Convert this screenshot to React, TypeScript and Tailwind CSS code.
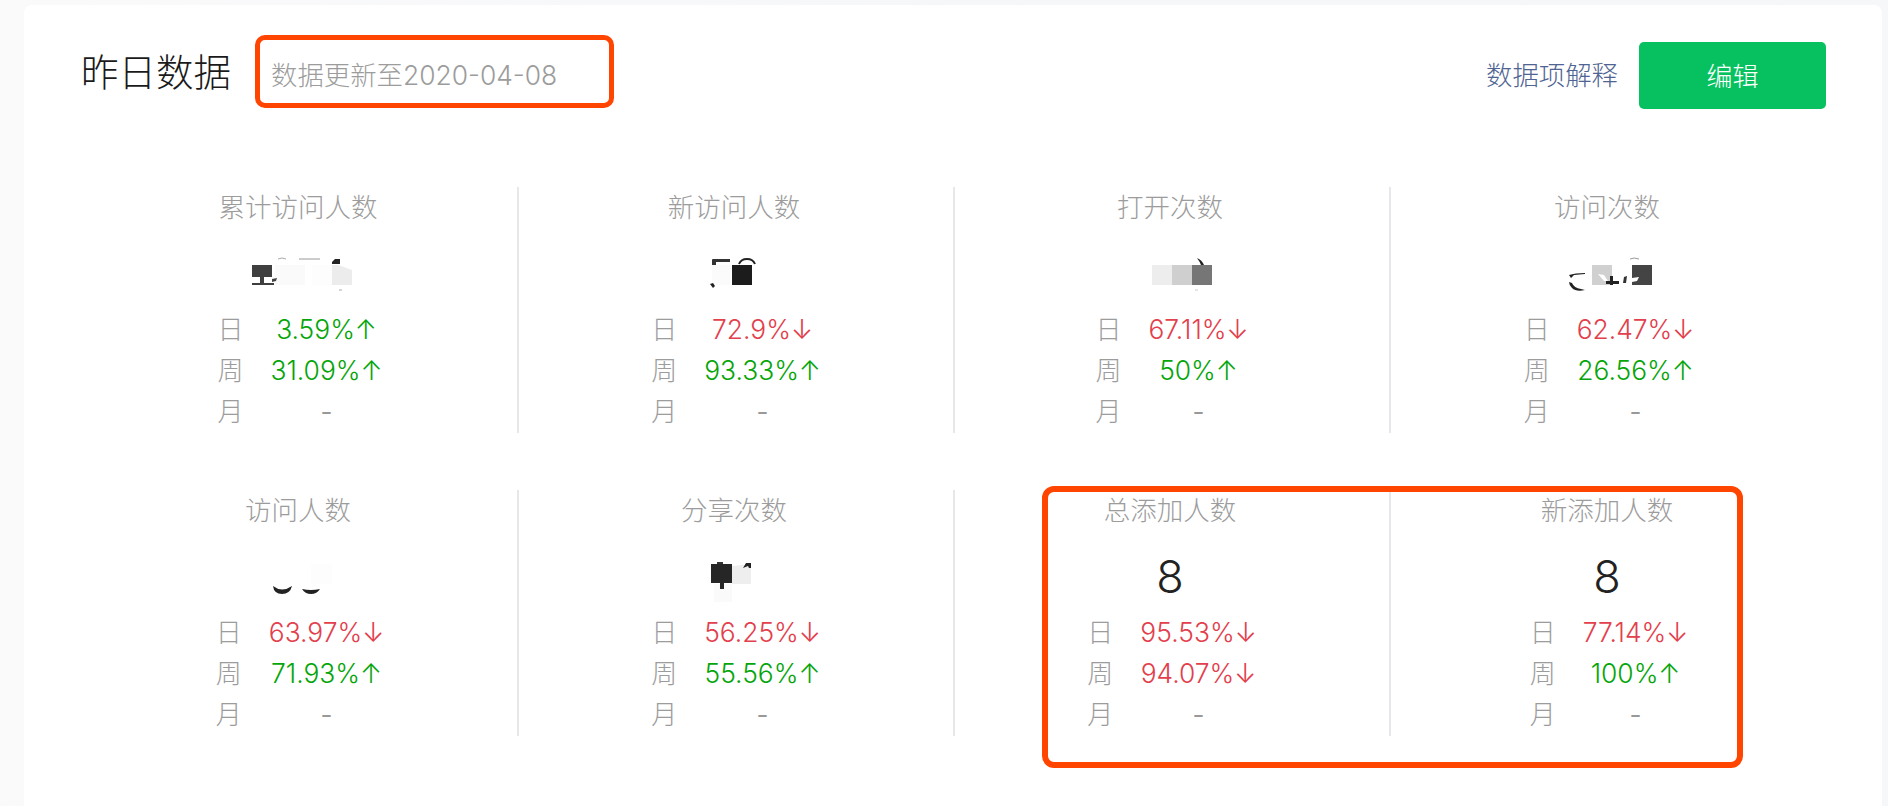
const stats = [
  {
    title: "累计访问人数",
    day: "3.59%↑",
    week: "31.09%↑",
    mosaic: (
      <svg width="120" height="50" viewBox="240 248 120 50">
        <rect x="275" y="264" width="30" height="20" fill="#fafafa" />
        <rect x="312" y="264" width="20" height="20" fill="#fdfdfd" />
        <path d="M332 264h6l14 5v15h-20z" fill="#ececec" />
        <rect x="252" y="264" width="20" height="12" fill="#3f3f3f" />
        <rect x="260" y="276" width="4" height="7" fill="#3f3f3f" />
        <rect x="252" y="282" width="22" height="2" fill="#3f3f3f" />
        <path d="M272 278l5-1-1 3-4 1z" fill="#444" />
        <path d="M332 263v-2l3-3h5v5z" fill="#222" />
        <path d="M299 258h21" stroke="#999" strokeWidth="1" />
        <path d="M278 258q4-2 8 0" stroke="#aaa" strokeWidth="1" fill="none" />
        <path d="M339 289h3" stroke="#aaa" strokeWidth="1" />
      </svg>
    ),
  },
  {
    title: "新访问人数",
    day: "72.9%↓",
    week: "93.33%↑",
    mosaic: (
      <svg width="120" height="50" viewBox="676 248 120 50">
        <rect x="712" y="264" width="19" height="20" fill="#fbfbfb" />
        <path d="M712 264v-5q0-1 1-1h17v3h-14v3z" fill="#333" />
        <rect x="732" y="264" width="20" height="20" fill="#1c1c1c" />
        <path d="M739 263q2-5 8-5t8 5" stroke="#222" strokeWidth="2" fill="none" />
        <path d="M710 283l3-1 2 3-2 2z" fill="#222" />
      </svg>
    ),
  },
  {
    title: "打开次数",
    day: "67.11%↓",
    week: "50%↑",
    mosaic: (
      <svg width="120" height="50" viewBox="1112 248 120 50">
        <rect x="1152" y="264" width="20" height="20" fill="#ededed" />
        <rect x="1172" y="264" width="20" height="20" fill="#cfcfcf" />
        <rect x="1192" y="264" width="20" height="20" fill="#767676" />
        <path d="M1197 257q5 2 7 7h-3q-1-3-4-7z" fill="#222" />
        <path d="M1195 289h3" stroke="#ccc" strokeWidth="1" />
      </svg>
    ),
  },
  {
    title: "访问次数",
    day: "62.47%↓",
    week: "26.56%↑",
    mosaic: (
      <svg width="120" height="50" viewBox="1549 248 120 50">
        <rect x="1592" y="264" width="20" height="20" fill="#d0d0d0" />
        <path d="M1598 273l6 1 4 6h-4z" fill="#fff" />
        <rect x="1632" y="264" width="20" height="20" fill="#444" />
        <path d="M1632 277l7-1-2 4-5 1z" fill="#fff" />
        <rect x="1610" y="275" width="3" height="9" fill="#222" />
        <rect x="1606" y="280" width="13" height="3" fill="#222" />
        <path d="M1624 276l3-1-1 7h-3z" fill="#333" />
        <path d="M1569 274q6-2 16-2v1l-11 1-3 3zM1569 281l3 1q2 5 9 6l4 1q-9 2-13-2-3-3-3-6z" fill="#222" />
        <path d="M1630 258q4-2 9 0" stroke="#999" strokeWidth="1" fill="none" />
      </svg>
    ),
  },
  {
    title: "访问人数",
    day: "63.97%↓",
    week: "71.93%↑",
    mosaic: (
      <svg width="120" height="50" viewBox="240 551 120 50">
        <rect x="311" y="563" width="21" height="20" fill="#fdfdfd" />
        <path d="M273 585q9 7 19 0-2 8-10 8t-9-8z" fill="#222" />
        <path d="M302 588q9 2 18 0-3 5-9 5t-9-5z" fill="#222" />
      </svg>
    ),
  },
  {
    title: "分享次数",
    day: "56.25%↓",
    week: "55.56%↑",
    mosaic: (
      <svg width="120" height="50" viewBox="674 551 120 50">
        <rect x="712" y="583" width="18" height="20" fill="#fafafa" />
        <path d="M730 565l11-1 8 2v17h-19z" fill="#eeeeee" />
        <rect x="709" y="563" width="21" height="19" fill="#262626" />
        <rect x="718" y="582" width="4" height="6" fill="#262626" />
        <rect x="715" y="561" width="6" height="2" fill="#333" />
        <path d="M741 567l3-5h5v5h-2l-1-2z" fill="#222" />
      </svg>
    ),
  },
  { title: "总添加人数", day: "95.53%↓", week: "94.07%↓", value: "8" },
  { title: "新添加人数", day: "77.14%↓", week: "100%↑", value: "8" },
];

function Trend({ text }: { text: string }) {
  const up = text.endsWith("↑");
  return <span className={up ? "text-center text-[26.4px] font-light text-[#05a50a]" : "text-center text-[26.4px] font-light text-[#e2404c]"}>{text}</span>;
}

function StatCell({ stat, last }: { stat: (typeof stats)[number]; last: boolean }) {
  return (
    <div className={last ? "flex h-[246px] flex-col items-center" : "flex h-[246px] flex-col items-center border-r-2 border-[#e8e8ec]"}>
      <div className="mt-[2px] h-[38px] pr-1 text-[26.5px] leading-[36px] font-light text-[#9c9c9c]">{stat.title}</div>
      {/* value, mosaicked in most cells */}
      <div className="mt-[17px] mb-[5px] flex h-[60px] items-center justify-center text-[45px] font-light text-[#222222]">
        {stat.value ? <span className="pr-1">{stat.value}</span> : stat.mosaic}
      </div>
      <div className="grid grid-cols-[auto_auto] gap-x-[27px] text-[26px] leading-[41px]">
        <span className="font-light text-[#9c9c9c]">日</span>
        <Trend text={stat.day} />
        <span className="font-light text-[#9c9c9c]">周</span>
        <Trend text={stat.week} />
        <span className="font-light text-[#9c9c9c]">月</span>
        <span className="text-center text-[#999999]">-</span>
      </div>
    </div>
  );
}

export default function App() {
  return (
    <div className="relative h-[806px] overflow-hidden bg-linear-to-r from-[#fafafb] to-[#f6f7f9] to-50% pt-[5px] pr-[6px] pl-6 font-['Inter','Noto_Sans_CJK_SC',sans-serif]">
      <div className="h-[801px] rounded-t-lg bg-white pr-[55px] pl-[59px]">
        {/* Header */}
        <div className="flex h-[182px] items-start justify-between">
          <div className="mt-[30px] flex items-center">
            <h1 className="-ml-[2px] pt-[2px] text-[37.5px] leading-[71px] font-light text-[#1a1a1a]">昨日数据</h1>
            <div className="ml-6 flex h-[73px] w-[359px] items-center rounded-[10px] border-[5px] border-[#ff4500] pt-[8px] pl-[11px] text-[26.4px] font-light text-[#9c9c9c]">
              数据更新至2020-04-08
            </div>
          </div>
          <div className="mt-[37px] mr-px flex items-center gap-[21px]">
            <a className="text-[26.4px] font-light text-[#4f6492]">数据项解释</a>
            <button className="h-[67px] w-[187px] rounded-[5px] bg-[#07c160] pt-[2px] text-[26px] font-light text-white">编辑</button>
          </div>
        </div>

        {/* Stat grid */}
        <div className="grid grid-cols-4 gap-y-[57px]">
          {stats.map((stat, i) => (
            <StatCell key={stat.title} stat={stat} last={i === 3 || i === 7} />
          ))}
        </div>
      </div>

      {/* Annotation around the two new cells */}
      <div className="absolute top-[486px] left-[1042px] h-[282px] w-[701px] rounded-[12px] border-[6px] border-[#ff4500]" />
    </div>
  );
}
